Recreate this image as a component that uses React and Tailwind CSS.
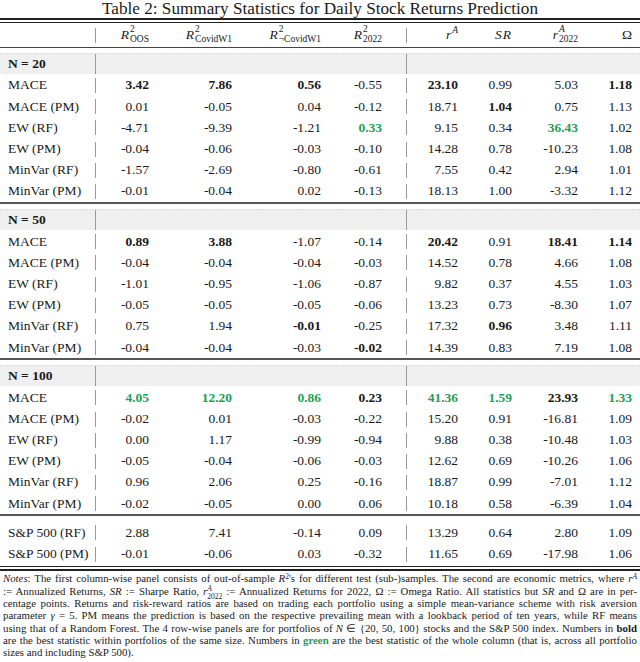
import React from 'react'

const L = ['w-[53px]', 'w-[83px]', 'w-[89px]', 'w-[61px]']
const R = ['w-[51px]', 'w-[54px]', 'w-[66px]', 'w-[54px]']

// '*' = bold, '!' = green (best of column)
const panels = [
  {
    title: 'N = 20',
    rows: [
      ['MACE', '*3.42 *7.86 *0.56 -0.55 *23.10 0.99 5.03 *1.18'],
      ['MACE (PM)', '0.01 -0.05 0.04 -0.12 18.71 *1.04 0.75 1.13'],
      ['EW (RF)', '-4.71 -9.39 -1.21 !0.33 9.15 0.34 !36.43 1.02'],
      ['EW (PM)', '-0.04 -0.06 -0.03 -0.10 14.28 0.78 -10.23 1.08'],
      ['MinVar (RF)', '-1.57 -2.69 -0.80 -0.61 7.55 0.42 2.94 1.01'],
      ['MinVar (PM)', '-0.01 -0.04 0.02 -0.13 18.13 1.00 -3.32 1.12'],
    ],
  },
  {
    title: 'N = 50',
    rows: [
      ['MACE', '*0.89 *3.88 -1.07 -0.14 *20.42 0.91 *18.41 *1.14'],
      ['MACE (PM)', '-0.04 -0.04 -0.04 -0.03 14.52 0.78 4.66 1.08'],
      ['EW (RF)', '-1.01 -0.95 -1.06 -0.87 9.82 0.37 4.55 1.03'],
      ['EW (PM)', '-0.05 -0.05 -0.05 -0.06 13.23 0.73 -8.30 1.07'],
      ['MinVar (RF)', '0.75 1.94 *-0.01 -0.25 17.32 *0.96 3.48 1.11'],
      ['MinVar (PM)', '-0.04 -0.04 -0.03 *-0.02 14.39 0.83 7.19 1.08'],
    ],
  },
  {
    title: 'N = 100',
    rows: [
      ['MACE', '!4.05 !12.20 !0.86 *0.23 !41.36 !1.59 *23.93 !1.33'],
      ['MACE (PM)', '-0.02 0.01 -0.03 -0.22 15.20 0.91 -16.81 1.09'],
      ['EW (RF)', '0.00 1.17 -0.99 -0.94 9.88 0.38 -10.48 1.03'],
      ['EW (PM)', '-0.05 -0.04 -0.06 -0.03 12.62 0.69 -10.26 1.06'],
      ['MinVar (RF)', '0.96 2.06 0.25 -0.16 18.87 0.99 -7.01 1.12'],
      ['MinVar (PM)', '-0.02 -0.05 0.00 0.06 10.18 0.58 -6.39 1.04'],
    ],
  },
]

const sp = [
  ['S&P 500 (RF)', '2.88 7.41 -0.14 0.09 13.29 0.64 2.80 1.09'],
  ['S&P 500 (PM)', '-0.01 -0.06 0.03 -0.32 11.65 0.69 -17.98 1.06'],
]

function VLine({ full }) {
  return <div className={full ? 'w-px self-stretch bg-[#9a9a9a]' : 'w-px h-[15px] bg-[#9a9a9a]'} />
}

function Val({ v }) {
  if (v[0] === '*') return <span className="font-bold">{v.slice(1)}</span>
  if (v[0] === '!') return <span className="font-bold text-[#1e9e57]">{v.slice(1)}</span>
  return <span>{v}</span>
}

function Line({ label, cells, band, tall }) {
  return (
    <div className={`flex items-center ${band ? 'h-[21px] bg-[#efefef] border-t border-dashed border-[#dcdcdc]' : tall ? 'h-[24px]' : 'h-[21.2px]'}`}>
      <div className="w-[95px] pl-2 whitespace-nowrap">{label}</div>
      <VLine full={band} />
      {L.map((w, i) => (
        <div key={i} className={`${w} text-right whitespace-nowrap`}>{cells && cells[i]}</div>
      ))}
      <div className="w-[24px]" />
      <VLine full={band} />
      {R.map((w, i) => (
        <div key={i} className={`${w} text-right whitespace-nowrap`}>{cells && cells[i + 4]}</div>
      ))}
    </div>
  )
}

function Sym({ b, sup, sub }) {
  return (
    <span className="inline-flex items-center">
      <i>{b}</i>
      <span className="flex flex-col text-left leading-[10px] text-[9.5px] ml-[1px] -mt-[2px]">
        <span className={sub ? '' : '-mt-[8px]'}>{sup}</span>
        {sub && <span>{sub}</span>}
      </span>
    </span>
  )
}

const header = [
  <Sym b="R" sup="2" sub="OOS" />,
  <Sym b="R" sup="2" sub="CovidW1" />,
  <Sym b="R" sup="2" sub="¬CovidW1" />,
  <Sym b="R" sup="2" sub="2022" />,
  <Sym b="r" sup={<i>A</i>} />,
  <i className="tracking-[1px]">SR</i>,
  <Sym b="r" sup={<i>A</i>} sub="2022" />,
  <span>Ω</span>,
]

function DataRow({ r }) {
  return <Line label={r[0]} cells={r[1].split(' ').map((v, i) => <Val key={i} v={v} />)} />
}

const noteLines = [
  <>
    <i>Notes</i>: The first column-wise panel consists of out-of-sample <i>R</i>
    <sup className="text-[7.5px]">2</sup>'s for different test (sub-)samples. The second are economic metrics, where <i>r</i>
    <sup className="text-[7.5px] italic">A</sup>
  </>,
  <>
    := Annualized Returns, <i>SR</i> := Sharpe Ratio, <i>r</i>
    <span className="relative inline-block w-[15px] h-0 text-[7.5px] leading-none">
      <i className="absolute left-0 -top-[10px]">A</i>
      <span className="absolute left-0 -top-[2px]">2022</span>
    </span> := Annualized Returns for 2022, Ω := Omega Ratio. All statistics but <i>SR</i> and Ω are in per-
  </>,
  <>centage points. Returns and risk-reward ratios are based on trading each portfolio using a simple mean-variance scheme with risk aversion</>,
  <>
    parameter <i>γ</i> = 5. PM means the prediction is based on the respective prevailing mean with a lookback period of ten years, while RF means
  </>,
  <>
    using that of a Random Forest. The 4 row-wise panels are for portfolios of <i>N</i> ∈ {'{'}20, 50, 100{'}'} stocks and the S&amp;P 500 index. Numbers in <b>bold</b>
  </>,
  <>
    are the best statistic within portfolios of the same size. Numbers in <span className="text-[#1e9e57] font-bold">green</span> are the best statistic of the whole column (that is, across all portfolio
  </>,
]

export default function App() {
  return (
    <div className="w-[640px] h-[662px] bg-white text-[#1a1a1a] font-['Liberation_Serif',serif] overflow-hidden">
      <div className="h-[18px] text-center text-[17.2px] leading-[19px] -mt-px">Table 2: Summary Statistics for Daily Stock Returns Prediction</div>

      <div className="text-[13.5px] mt-px">
        <div className="h-[2px] bg-[#222]" />
        <div className="h-[2px]" />
        <div className="h-px bg-[#222]" />
        <Line tall cells={header} />
        <div className="h-px bg-[#444]" />

        {panels.map((p, pi) => (
          <div key={pi}>
            {pi > 0 && <div className="h-[2px] bg-[#555]" />}
            <div className="h-[5px]" />
            <Line band label={<b>{p.title}</b>} />
            <div className="h-px" />
            {p.rows.map((r, i) => <DataRow key={i} r={r} />)}
          </div>
        ))}

        <div className="h-[2px] bg-[#555]" />
        <div className="h-[6px]" />
        {sp.map((r, i) => <DataRow key={i} r={r} />)}
        <div className="h-[1.5px]" />
        <div className="h-px bg-[#222]" />
        <div className="h-[2px]" />
        <div className="h-[2px] bg-[#222]" />
      </div>

      <div className="px-[3px] pt-[1px] text-[10.8px] leading-[12.35px]">
        {noteLines.map((l, i) => (
          <div key={i} className="h-[12.35px] text-justify [text-align-last:justify] whitespace-nowrap">{l}</div>
        ))}
        <div>sizes and including S&amp;P 500).</div>
      </div>
    </div>
  )
}
